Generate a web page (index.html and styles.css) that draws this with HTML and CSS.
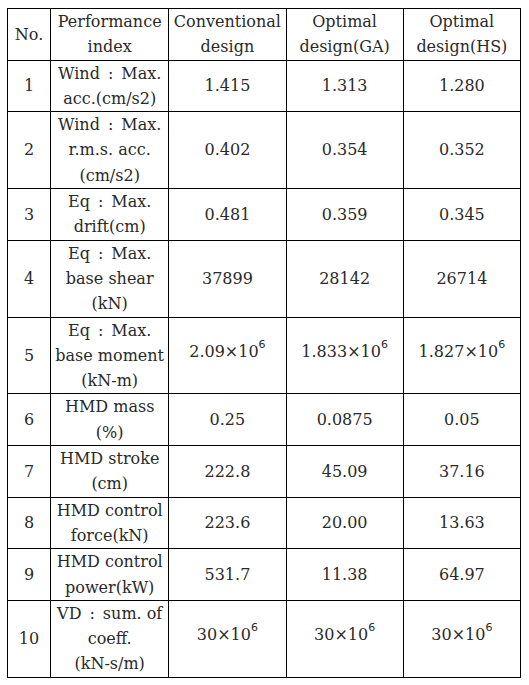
FILE: index.html
```html
<!DOCTYPE html>
<html lang="en">
<head>
    <meta charset="UTF-8">
    <meta name="viewport" content="width=device-width, initial-scale=1.0">
    <title>Performance comparison</title>
    <link rel="stylesheet" href="styles.css">
</head>
<body>
    <table class="results">
        <colgroup>
            <col class="c-no">
            <col class="c-index">
            <col class="c-val">
            <col class="c-val">
            <col class="c-val">
        </colgroup>
        <tr>
            <td>No.</td>
            <td>Performance<br>index</td>
            <td>Conventional<br>design</td>
            <td>Optimal<br>design(GA)</td>
            <td>Optimal<br>design(HS)</td>
        </tr>
        <tr>
            <td>1</td>
            <td>Wind&ensp;:&ensp;Max.<br>acc.(cm/s2)</td>
            <td>1.415</td>
            <td>1.313</td>
            <td>1.280</td>
        </tr>
        <tr>
            <td>2</td>
            <td>Wind&ensp;:&ensp;Max.<br>r.m.s. acc.<br>(cm/s2)</td>
            <td>0.402</td>
            <td>0.354</td>
            <td>0.352</td>
        </tr>
        <tr>
            <td>3</td>
            <td>Eq&ensp;:&ensp;Max.<br>drift(cm)</td>
            <td>0.481</td>
            <td>0.359</td>
            <td>0.345</td>
        </tr>
        <tr>
            <td>4</td>
            <td>Eq&ensp;:&ensp;Max.<br>base shear<br>(kN)</td>
            <td>37899</td>
            <td>28142</td>
            <td>26714</td>
        </tr>
        <tr>
            <td>5</td>
            <td>Eq&ensp;:&ensp;Max.<br>base moment<br>(kN-m)</td>
            <td class="sci">2.09×10<sup>6</sup></td>
            <td class="sci">1.833×10<sup>6</sup></td>
            <td class="sci">1.827×10<sup>6</sup></td>
        </tr>
        <tr>
            <td>6</td>
            <td>HMD mass<br>(%)</td>
            <td>0.25</td>
            <td>0.0875</td>
            <td>0.05</td>
        </tr>
        <tr>
            <td>7</td>
            <td>HMD stroke<br>(cm)</td>
            <td>222.8</td>
            <td>45.09</td>
            <td>37.16</td>
        </tr>
        <tr>
            <td>8</td>
            <td>HMD control<br>force(kN)</td>
            <td>223.6</td>
            <td>20.00</td>
            <td>13.63</td>
        </tr>
        <tr>
            <td>9</td>
            <td>HMD control<br>power(kW)</td>
            <td>531.7</td>
            <td>11.38</td>
            <td>64.97</td>
        </tr>
        <tr>
            <td>10</td>
            <td>VD&ensp;:&ensp;sum. of<br>coeff.<br>(kN-s/m)</td>
            <td class="sci">30×10<sup>6</sup></td>
            <td class="sci">30×10<sup>6</sup></td>
            <td class="sci">30×10<sup>6</sup></td>
        </tr>
    </table>
</body>
</html>
```

FILE: styles.css
```css
body {
    margin: 0;
    background-color: white;
    font-family: "DejaVu Serif", "Liberation Serif", serif;
    color: #2a2a2a;
}

.results {
    border-collapse: collapse;
    margin: 8px 0 0 7px;
    table-layout: fixed;
    width: 514px;
    font-size: 16px;
    line-height: 25.3px;
}

.c-no {
    width: 43px;
}

.c-index {
    width: 118px;
}

.c-val {
    width: 117px;
}

.results td {
    border: 1.5px solid #000;
    padding: 0;
    text-align: center;
    vertical-align: middle;
    white-space: nowrap;
}

.results sup {
    font-family: "DejaVu Sans", sans-serif;
    font-size: 11px;
    line-height: 0;
    vertical-align: 9px;
}

.sci {
    padding-bottom: 8px !important;
}
```
